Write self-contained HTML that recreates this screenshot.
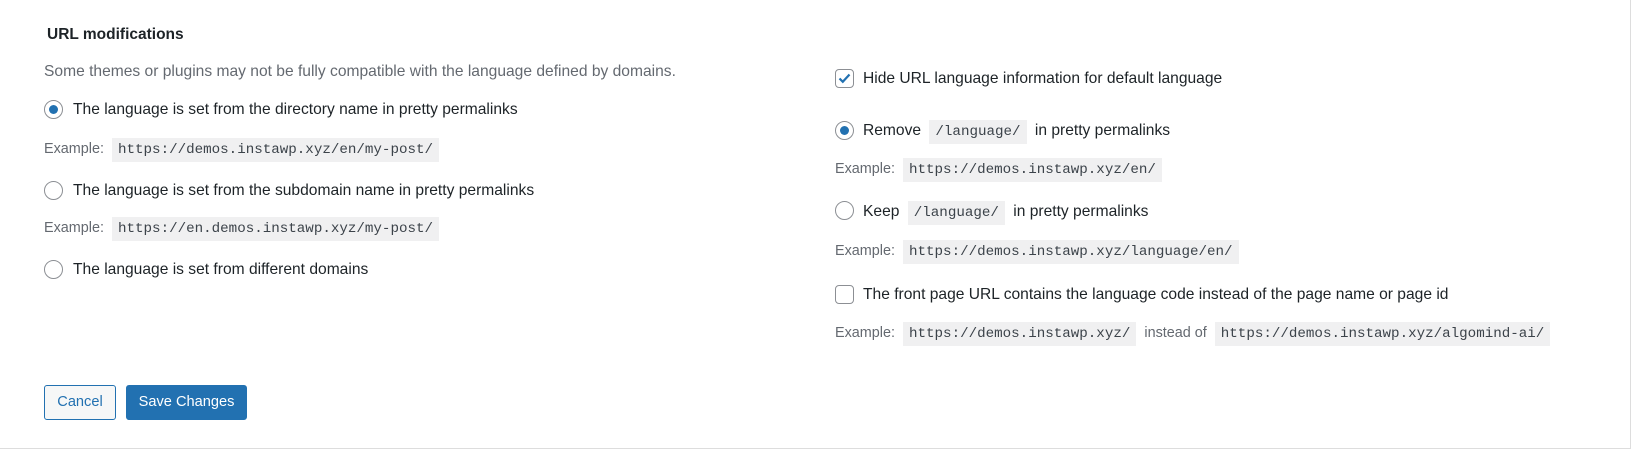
<!DOCTYPE html>
<html><head><meta charset="utf-8"><style>
html,body{margin:0;padding:0;}
body{width:1632px;height:450px;background:#fff;position:relative;overflow:hidden;font-family:"Liberation Sans",sans-serif;font-size:15.6px;color:#1d2327;}
.frame{position:absolute;left:0;top:0;width:1630px;height:448px;border-right:1px solid #ddd;border-bottom:1px solid #ddd;}
.a{position:absolute;white-space:nowrap;line-height:20px;}
.t{font-weight:bold;font-size:15.5px;}
.g{color:#646970;}
.ex{color:#646970;font-size:14.4px;}
code{font-family:"Liberation Mono",monospace;font-size:14.2px;background:#f0f0f1;padding:4px 6px;color:#3c434a;margin-left:4px;}
.r{position:absolute;width:17px;height:17px;border:1px solid #8c8f94;border-radius:50%;background:#fff;}
.r.on::after{content:"";position:absolute;left:4px;top:4px;width:9px;height:9px;border-radius:50%;background:#2271b1;}
.c{position:absolute;width:17px;height:17px;border:1px solid #8c8f94;border-radius:4px;background:#fff;}
.btn{position:absolute;height:35px;line-height:33px;border-radius:3px;font-size:14.6px;text-align:center;box-sizing:border-box;}
</style></head><body>
<div class="frame"></div>
<div class="a t" style="left:47px;top:25px">URL modifications</div>
<div class="a g" style="left:44px;top:62px">Some themes or plugins may not be fully compatible with the language defined by domains.</div>

<div class="r on" style="left:44px;top:100px"></div>
<div class="a" style="left:73px;top:100px">The language is set from the directory name in pretty permalinks</div>
<div class="a ex" style="left:44px;top:139px">Example: <code>https://demos.instawp.xyz/en/my-post/</code></div>

<div class="r" style="left:44px;top:181px"></div>
<div class="a" style="left:73px;top:181px">The language is set from the subdomain name in pretty permalinks</div>
<div class="a ex" style="left:44px;top:218px">Example: <code>https://en.demos.instawp.xyz/my-post/</code></div>

<div class="r" style="left:44px;top:260px"></div>
<div class="a" style="left:73px;top:260px">The language is set from different domains</div>

<div class="c" style="left:835px;top:69px"><svg width="17" height="17" viewBox="0 0 17 17" style="position:absolute;left:0;top:0"><path d="M3.5 8.5l3.3 3.3L13.5 4.5" stroke="#2271b1" stroke-width="2.2" fill="none"/></svg></div>
<div class="a" style="left:863px;top:69px">Hide URL language information for default language</div>

<div class="r on" style="left:835px;top:121px"></div>
<div class="a" style="left:863px;top:121px">Remove <code style="margin:0 4px">/language/</code> in pretty permalinks</div>
<div class="a ex" style="left:835px;top:159px">Example: <code>https://demos.instawp.xyz/en/</code></div>

<div class="r" style="left:835px;top:201px"></div>
<div class="a" style="left:863px;top:202px">Keep <code style="margin:0 4px">/language/</code> in pretty permalinks</div>
<div class="a ex" style="left:835px;top:241px">Example: <code>https://demos.instawp.xyz/language/en/</code></div>

<div class="c" style="left:835px;top:285px"></div>
<div class="a" style="left:863px;top:285px">The front page URL contains the language code instead of the page name or page id</div>
<div class="a ex" style="left:835px;top:323px">Example: <code>https://demos.instawp.xyz/</code> &nbsp;instead of <code>https://demos.instawp.xyz/algomind-ai/</code></div>

<div class="btn" style="left:44px;top:385px;width:72px;border:1px solid #2271b1;background:#f6f7f7;color:#2271b1">Cancel</div>
<div class="btn" style="left:126px;top:385px;width:121px;background:#2271b1;color:#fff;border:1px solid #2271b1">Save Changes</div>
</body></html>
